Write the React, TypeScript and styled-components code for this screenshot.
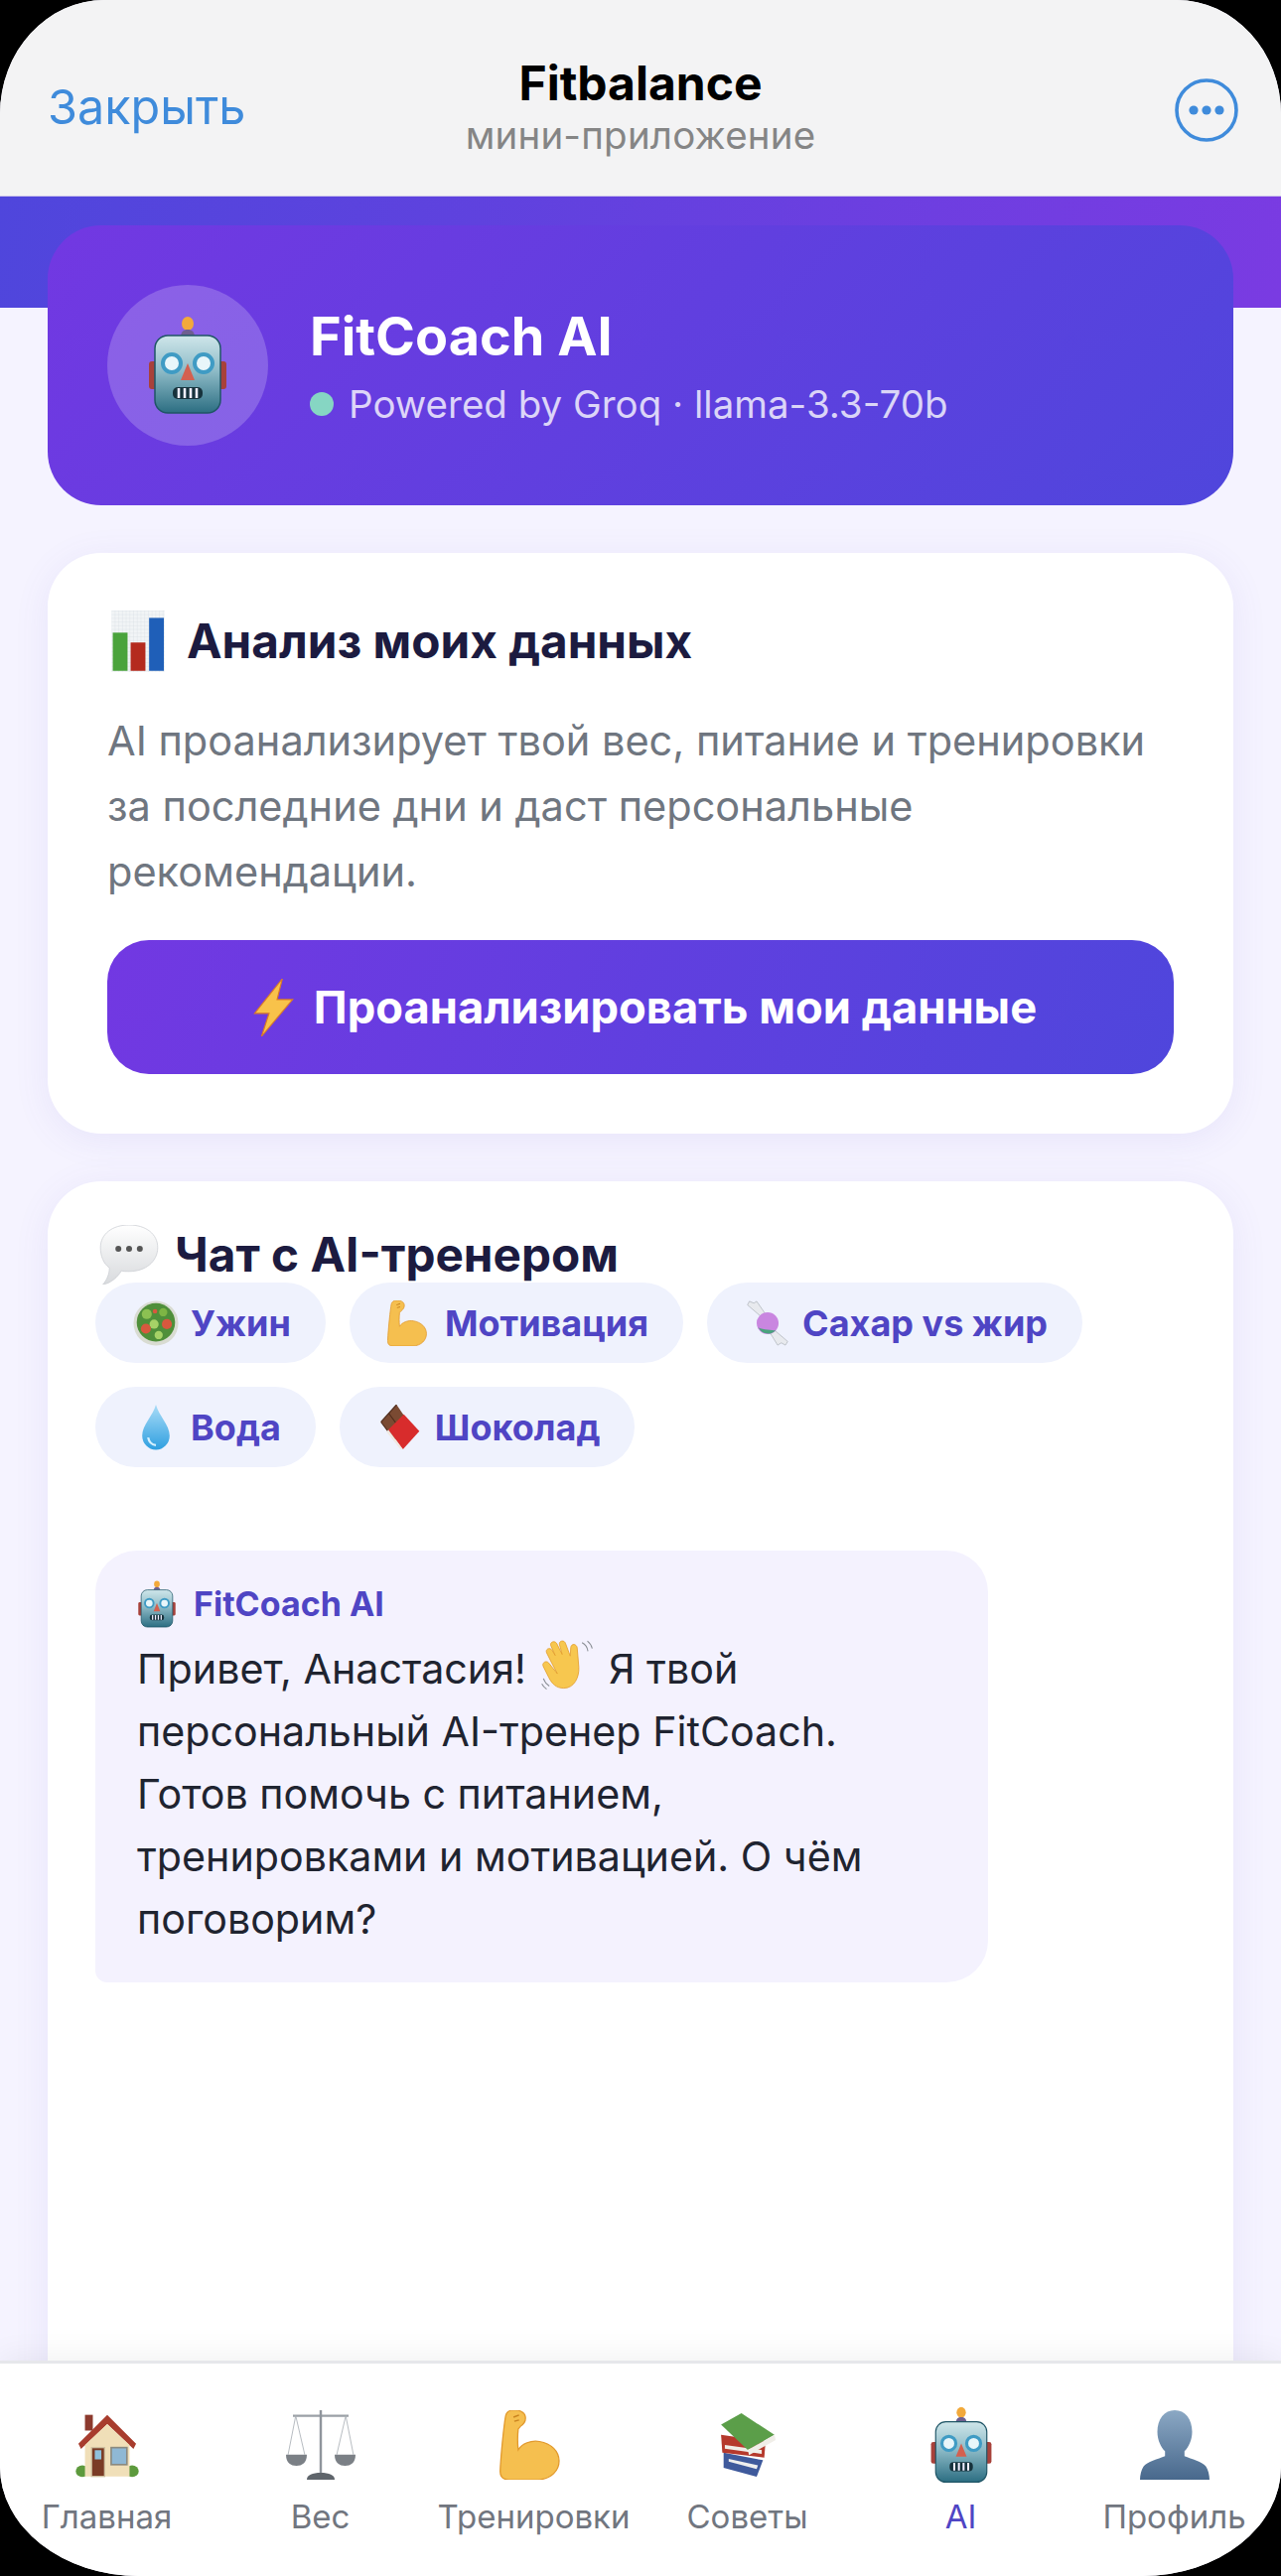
import React from "react";
import styled, { createGlobalStyle } from "styled-components";

const Global = createGlobalStyle`
  html, body { margin: 0; padding: 0; background: #000; }
  * { box-sizing: border-box; }
  body { font-family: Inter, "Noto Sans", "Liberation Sans", sans-serif; }
`;

const Screen = styled.div`
  width: 1290px; height: 2595px; background: #f5f3ff; overflow: hidden;
  border-radius: 105px 105px 140px 140px / 115px 115px 110px 110px;
  display: flex; flex-direction: column;
`;
const TopBar = styled.header`
  height: 198px; flex: none; background: #f3f3f4; padding: 24px 43px 0;
  display: grid; grid-template-columns: 1fr auto 1fr; align-items: center;
  border-bottom: 1px solid #cfc8ec;
`;
const CloseLabel = styled.span`font-size: 48.5px; color: #3f8bdb; margin: -6px 0 0 5px;`;
const TitleBlock = styled.div`
  display: flex; flex-direction: column; align-items: center; margin-top: -7px;
`;
const AppName = styled.div`font-size: 48px; font-weight: 700; color: #000; line-height: 58px;`;
const AppSub = styled.div`font-size: 38.5px; color: #858585; line-height: 46px; letter-spacing: 0.2px;`;
const More = styled.div`justify-self: end; display: flex;`;
const Main = styled.main`flex: 1; min-height: 0; overflow: hidden; display: flex; flex-direction: column;`;
const Band = styled.div`
  height: 112px; flex: none;
  background: linear-gradient(100deg, #4f46dc 0%, #7a3be2 100%);
`;
const Cards = styled.div`
  margin-top: -83px; padding: 0 48px; display: flex; flex-direction: column; gap: 48px;
`;
const Hero = styled.section`
  height: 282px; flex: none; border-radius: 54px; padding: 0 60px;
  background: linear-gradient(135deg, #7238e2 0%, #4f46dc 100%);
  display: flex; align-items: center; gap: 42px;
`;
const Avatar = styled.div`
  width: 162px; height: 162px; border-radius: 50%; background: rgba(255,255,255,0.2);
  display: flex; align-items: center; justify-content: center; flex: none;
`;
const HeroText = styled.div`display: flex; flex-direction: column; gap: 12px;`;
const HeroTitle = styled.div`font-size: 54px; font-weight: 700; color: #fff; line-height: 65px;`;
const HeroSub = styled.div`
  font-size: 38.5px; line-height: 48px; color: rgba(255,255,255,0.78);
  display: flex; align-items: center; gap: 15px;
`;
const Dot = styled.span`width: 24px; height: 24px; border-radius: 50%; background: #86d6c3; flex: none;`;
const Card = styled.section<{ $tall?: boolean; $pad: string }>`
  background: #fff; border-radius: 54px; padding: ${(p) => p.$pad};
  box-shadow: 0 6px 36px rgba(100, 90, 200, 0.09);
  flex: none;
  min-height: ${(p) => (p.$tall ? "1400px" : "0")};
`;
const SectionTitle = styled.h2<{ $gap: number; $inset: number }>`
  margin: 0 0 0 ${(p) => p.$inset}px; font-size: 47.7px; font-weight: 700; color: #1c1b40; line-height: 58px;
  display: flex; align-items: center; gap: ${(p) => p.$gap}px;
`;
const Desc = styled.p`
  margin: 36px 0 0; font-size: 41.5px; line-height: 66px; color: #6f7680;
`;
const Action = styled.button`
  margin-top: 36px; width: 100%; height: 135px; border: 0; border-radius: 42px;
  background: linear-gradient(110deg, #7238e2 0%, #4f46dc 100%);
  color: #fff; font: 700 45.3px Inter, sans-serif;
  display: flex; align-items: center; justify-content: center; gap: 12px;
`;
const Chips = styled.div`display: flex; flex-wrap: wrap; gap: 24px; width: 1040px; margin-top: -2px;`;
const Chip = styled.div`
  height: 81px; border-radius: 41px; background: #eff2fd; padding: 0 35px 0 38px;
  color: #4f45c4; font-size: 36px; font-weight: 700;
  display: flex; align-items: center; gap: 12px;
`;
const ChatArea = styled.div`margin-top: 84px; display: flex;`;
const Bubble = styled.div`
  width: 899px; height: 435px; background: #f4f2fe; padding: 30px 42px;
  border-radius: 42px 42px 42px 12px;
`;
const BubbleName = styled.div`
  font-size: 34px; font-weight: 700; color: #4f45c4; line-height: 48px;
  display: flex; align-items: center; gap: 13px;
`;
const BubbleRobot = styled.span`margin-left: -4px; display: flex;`;
const BubbleText = styled.div`
  font-size: 41.2px; line-height: 63px; color: #1f2430; margin-top: 10px; width: 790px;
`;
const InlineIcon = styled.span`display: inline-block; vertical-align: -10px; margin: 0 3px;`;
const TabBar = styled.nav`
  height: 217px; flex: none; background: #fff; border-top: 3px solid #e6e7eb; position: relative;
  display: grid; grid-template-columns: repeat(6, 215px);
  box-shadow: 0 -4px 30px rgba(0,0,0,0.06);
`;
const Tab = styled.div<{ $active?: boolean }>`
  display: flex; flex-direction: column; align-items: center; padding-top: 46px;
  font-size: 33px; line-height: 40px; white-space: nowrap;
  color: ${(p) => (p.$active ? "#4f45c4" : "#71767f")};
`;
const TabIcon = styled.div`
  height: 72px; display: flex; align-items: center; justify-content: center; margin-bottom: 16px;
`;
const Svg = styled.svg<{ $s: number }>`width: ${(p) => p.$s}px; height: ${(p) => p.$s}px; display: block; flex: none;`;

type P = { s: number };
const Robot = ({ s }: P) => (
  <Svg $s={s} viewBox="0 0 100 100">
    <defs>
      <linearGradient id="rh" x1="0" y1="0" x2="0" y2="1">
        <stop offset="0" stopColor="#cfe6ea" /><stop offset=".45" stopColor="#8fbcc8" /><stop offset="1" stopColor="#2c6e82" />
      </linearGradient>
    </defs>
    <ellipse cx="50" cy="8" rx="6" ry="7" fill="#f2a93b" />
    <path d="M43 22c0-6 3-8 7-8s7 2 7 8z" fill="#6e5f90" />
    <rect x="11" y="46" width="10" height="28" rx="3" fill="#a8413a" />
    <rect x="79" y="46" width="10" height="28" rx="3" fill="#a8413a" />
    <rect x="17" y="20" width="66" height="78" rx="13" fill="url(#rh)" stroke="#1f5566" strokeWidth="1.5" />
    <circle cx="34" cy="48" r="9" fill="#e8f6fa" stroke="#3f9bc4" strokeWidth="4" />
    <circle cx="66" cy="48" r="9" fill="#e8f6fa" stroke="#3f9bc4" strokeWidth="4" />
    <path d="M50 48l7 17H43z" fill="#d4604f" />
    <rect x="35" y="72" width="30" height="12" rx="5" fill="#17323c" />
    <path d="M41 73v10M47 73v10M53 73v10M59 73v10" stroke="#eef" strokeWidth="2.6" />
  </Svg>
);
const Chart = ({ s }: P) => (
  <Svg $s={s} viewBox="0 0 100 100">
    <defs>
      <pattern id="cg" width="6" height="6" patternUnits="userSpaceOnUse">
        <path d="M6 0H0V6" fill="none" stroke="#cfd8de" strokeWidth="0.8" />
      </pattern>
    </defs>
    <rect x="7" y="0" width="86" height="100" fill="#f1f4f6" />
    <rect x="7" y="0" width="86" height="100" fill="url(#cg)" />
    <rect x="9" y="36" width="24" height="62" fill="#4aa33c" />
    <rect x="38" y="52" width="24" height="46" fill="#b42a1e" />
    <rect x="68" y="12" width="24" height="86" fill="#1f5fb8" />
  </Svg>
);
const Bolt = ({ s }: P) => (
  <Svg $s={s} viewBox="0 0 100 100">
    <path d="M66 0L18 60h25L30 100l54-64H57z" fill="#f8c24a" stroke="#d97a28" strokeWidth="2" />
  </Svg>
);
const Speech = ({ s }: P) => (
  <Svg $s={s} viewBox="0 0 100 100">
    <defs>
      <linearGradient id="sb" x1="0" y1="0" x2="0" y2="1">
        <stop offset="0" stopColor="#fff" /><stop offset="1" stopColor="#d8dadd" />
      </linearGradient>
    </defs>
    <path d="M50 0c28 0 48 15 48 38S78 78 50 78c-5 0-9 0-13 -1C32 86 20 98 6 100c7-8 11-18 11-28C7 65 2 52 2 38 2 15 22 0 50 0z" fill="url(#sb)" stroke="#c9ccd1" strokeWidth="1.2" />
    <circle cx="32" cy="40" r="5" fill="#555" /><circle cx="50" cy="40" r="5" fill="#555" /><circle cx="68" cy="40" r="5" fill="#555" />
  </Svg>
);
const Salad = ({ s }: P) => (
  <Svg $s={s} viewBox="0 0 100 100">
    <circle cx="50" cy="50" r="49" fill="#d9dcd2" />
    <circle cx="50" cy="48" r="42" fill="#4f8f3a" />
    <circle cx="30" cy="30" r="11" fill="#8cc152" /><circle cx="66" cy="26" r="9" fill="#7db544" />
    <circle cx="46" cy="52" r="10" fill="#a6d267" /><circle cx="74" cy="52" r="11" fill="#d8583e" />
    <circle cx="28" cy="62" r="11" fill="#d8583e" /><circle cx="56" cy="76" r="9" fill="#a6d267" />
    <circle cx="48" cy="24" r="5" fill="#d8583e" />
  </Svg>
);
const Muscle = ({ s }: P) => (
  <Svg $s={s} viewBox="0 0 100 100">
    <g transform="translate(-13.7 0) scale(1.13 1)">
      <path d="M30 0c7-1 14 3 15 9 1 6-2 11-6 14l-3 4c-1 10-1 20 0 30 5-9 16-14 27-12 15 3 25 14 25 28 0 14-10 26-26 27H24c-8 0-11-4-11-12C14 62 18 20 20 8c1-5 5-8 10-8z" fill="#f5bf4f" stroke="#e2992c" strokeWidth="1.6" />
      <path d="M30 10l7-3M31 16l6-2" stroke="#c98420" strokeWidth="2" />
    </g>
  </Svg>
);
const Candy = ({ s }: P) => (
  <Svg $s={s} viewBox="0 0 100 100">
    <path d="M34 34L6 10l4-8 10 4 6-4 18 26zM66 66l28 24-5 8-9-5-8 5-16-26z" fill="#e8eaee" stroke="#aab0b6" strokeWidth="1.5" />
    <circle cx="50" cy="50" r="24" fill="#c986e0" />
    <path d="M30 60a24 24 0 0 0 38 6c-8 0-28-2-38-6z" fill="#4aa37e" />
  </Svg>
);
const Drop = ({ s }: P) => (
  <Svg $s={s} viewBox="0 0 100 100">
    <defs>
      <linearGradient id="dg" x1="0" y1="0" x2="0" y2="1">
        <stop offset="0" stopColor="#a9dcf7" /><stop offset="1" stopColor="#2f9fe0" />
      </linearGradient>
    </defs>
    <path d="M50 0c6 24 30 44 30 68a30 31 0 0 1-60 0C20 44 44 24 50 0z" fill="url(#dg)" />
    <path d="M33 72c2 10 9 16 17 17" stroke="#d6f1ff" strokeWidth="5" fill="none" />
  </Svg>
);
const Chocolate = ({ s }: P) => (
  <Svg $s={s} viewBox="0 0 100 100">
    <path d="M8 38L42 0l30 44-34 34z" fill="#7a4a32" />
    <path d="M25 19l31 42M8 38l30 40M42 0L8 38" stroke="#4f2c1c" strokeWidth="2.5" fill="none" />
    <path d="M24 55l34-34 34 37-36 40z" fill="#d82c2c" />
    <path d="M24 55l32 43 -6-1L20 60z" fill="#f0e8e0" />
  </Svg>
);
const Wave = ({ s }: P) => (
  <Svg $s={s} viewBox="0 0 100 100">
    <path d="M22 44L12 24c-3-7 6-11 10-5l6 10-8-18c-3-7 7-11 11-4l10 20-5-18c-2-7 8-10 11-3l9 24 1-16c1-8 11-7 12 1l3 36c1 18-8 39-28 39-14 0-22-8-28-20L6 50c-4-7 5-13 10-7l16 20z" fill="#f7c74f" stroke="#e29d2b" strokeWidth="1.5" />
    <path d="M78 5c6 3 10 9 11 16M88 2c5 4 8 9 9 14M6 72c2 6 6 11 11 14M3 82c2 4 5 7 9 10" stroke="#8b8f96" strokeWidth="2" fill="none" />
  </Svg>
);
const House = ({ s }: P) => (
  <Svg $s={s} viewBox="0 0 100 100">
    <rect x="16" y="4" width="12" height="24" fill="#8c3a2e" />
    <ellipse cx="12" cy="90" rx="10" ry="9" fill="#5d9a3d" /><ellipse cx="88" cy="90" rx="10" ry="9" fill="#5d9a3d" />
    <path d="M16 46h68v52H16z" fill="#f0dfb8" />
    <path d="M50 4L6 48l4 8 40-38 40 38 4-8z" fill="#a83d2e" />
    <path d="M50 18L16 50h68z" fill="#f0dfb8" />
    <rect x="26" y="54" width="20" height="44" fill="#7a3b25" stroke="#cfc1a0" strokeWidth="2" />
    <rect x="31" y="58" width="10" height="14" fill="#8fc1dc" />
    <rect x="56" y="54" width="24" height="26" fill="#8fb8d4" stroke="#8a8a80" strokeWidth="2.5" />
  </Svg>
);
const Scales = ({ s }: P) => (
  <Svg $s={s} viewBox="0 0 100 100">
    <path d="M10 8h80" stroke="#9aa0a6" strokeWidth="3" />
    <path d="M50 0v90" stroke="#8f959c" strokeWidth="3.5" />
    <path d="M14 8L3 64M14 8l13 56M86 8L73 64M86 8l11 56" stroke="#a9afb5" strokeWidth="1.2" fill="none" />
    <path d="M0 64h30c0 12-7 16-15 16S0 76 0 64zM70 64h30c0 12-7 16-15 16s-15-4-15-16z" fill="#7b8086" />
    <path d="M30 100c0-7 8-10 20-10s20 3 20 10z" fill="#5f656b" />
  </Svg>
);
const Books = ({ s }: P) => (
  <Svg $s={s} viewBox="0 0 100 100">
    <path d="M12 62l62 12-10 26-52-14z" fill="#3f5a9c" /><path d="M20 72l46 10-2 6-44-12z" fill="#eee" />
    <path d="M8 34l70 10-2 26-66-8z" fill="#b5392c" /><path d="M14 50l58 8v6l-58-8z" fill="#f0eee8" />
    <path d="M8 18L40 0l52 34-42 24z" fill="#5b9e49" /><path d="M50 58l42-24 2 8-42 24z" fill="#f0eee8" />
  </Svg>
);
const Person = ({ s }: P) => (
  <Svg $s={s} viewBox="0 0 100 100">
    <defs>
      <linearGradient id="pg" x1="0" y1="0" x2="0" y2="1">
        <stop offset="0" stopColor="#8ba8c4" /><stop offset="1" stopColor="#48688c" />
      </linearGradient>
    </defs>
    <path d="M50 0c15 0 25 13 25 31 0 12-5 22-11 28v7c10 4 26 8 31 15 3 5 5 12 5 19H0c0-7 2-14 5-19 5-7 21-11 31-15v-7c-6-6-11-16-11-28C25 13 35 0 50 0z" fill="url(#pg)" />
  </Svg>
);
const MoreIcon = () => (
  <Svg $s={64} viewBox="0 0 64 64">
    <circle cx="32" cy="32" r="30" fill="none" stroke="#3f8bdb" strokeWidth="3.6" />
    <circle cx="19" cy="32" r="4.6" fill="#3f8bdb" /><circle cx="32" cy="32" r="4.6" fill="#3f8bdb" /><circle cx="45" cy="32" r="4.6" fill="#3f8bdb" />
  </Svg>
);

const chipsData: [React.ReactNode, string][] = [
  [<Salad s={46} />, "Ужин"],
  [<Muscle s={46} />, "Мотивация"],
  [<Candy s={46} />, "Сахар vs жир"],
  [<Drop s={46} />, "Вода"],
  [<Chocolate s={46} />, "Шоколад"],
];
const tabs: [React.ReactNode, string, boolean?][] = [
  [<House s={66} />, "Главная"],
  [<Scales s={70} />, "Вес"],
  [<Muscle s={70} />, "Тренировки"],
  [<Books s={64} />, "Советы"],
  [<Robot s={78} />, "AI", true],
  [<Person s={70} />, "Профиль"],
];

export default function App() {
  return (
    <>
      <Global />
      <Screen>
        <TopBar>
          <CloseLabel>Закрыть</CloseLabel>
          <TitleBlock>
            <AppName>Fitbalance</AppName>
            <AppSub>мини-приложение</AppSub>
          </TitleBlock>
          <More><MoreIcon /></More>
        </TopBar>
        <Main>
          <Band />
          <Cards>
            <Hero>
              <Avatar><Robot s={100} /></Avatar>
              <HeroText>
                <HeroTitle>FitCoach AI</HeroTitle>
                <HeroSub><Dot />Powered by Groq · llama-3.3-70b</HeroSub>
              </HeroText>
            </Hero>
            <Card $pad="58px 60px 60px">
              <SectionTitle $gap={18} $inset={0}><Chart s={62} />Анализ моих данных</SectionTitle>
              <Desc>AI проанализирует твой вес, питание и тренировки за последние дни и даст персональные рекомендации.</Desc>
              <Action><Bolt s={58} />Проанализировать мои данные</Action>
            </Card>
            <Card $tall $pad="44px 48px 0">
              <SectionTitle $gap={16} $inset={4}><Speech s={60} />Чат с AI-тренером</SectionTitle>
              <Chips>
                {chipsData.map(([icon, label]) => (
                  <Chip key={label}>{icon}{label}</Chip>
                ))}
              </Chips>
              <ChatArea>
                <Bubble>
                  <BubbleName><BubbleRobot><Robot s={48} /></BubbleRobot>FitCoach AI</BubbleName>
                  <BubbleText>
                    Привет, Анастасия! <InlineIcon><Wave s={54} /></InlineIcon> Я твой персональный AI-тренер FitCoach. Готов помочь с питанием, тренировками и мотивацией. О чём поговорим?
                  </BubbleText>
                </Bubble>
              </ChatArea>
            </Card>
          </Cards>
        </Main>
        <TabBar>
          {tabs.map(([icon, label, active]) => (
            <Tab key={label} $active={active}>
              <TabIcon>{icon}</TabIcon>
              {label}
            </Tab>
          ))}
        </TabBar>
      </Screen>
    </>
  );
}
